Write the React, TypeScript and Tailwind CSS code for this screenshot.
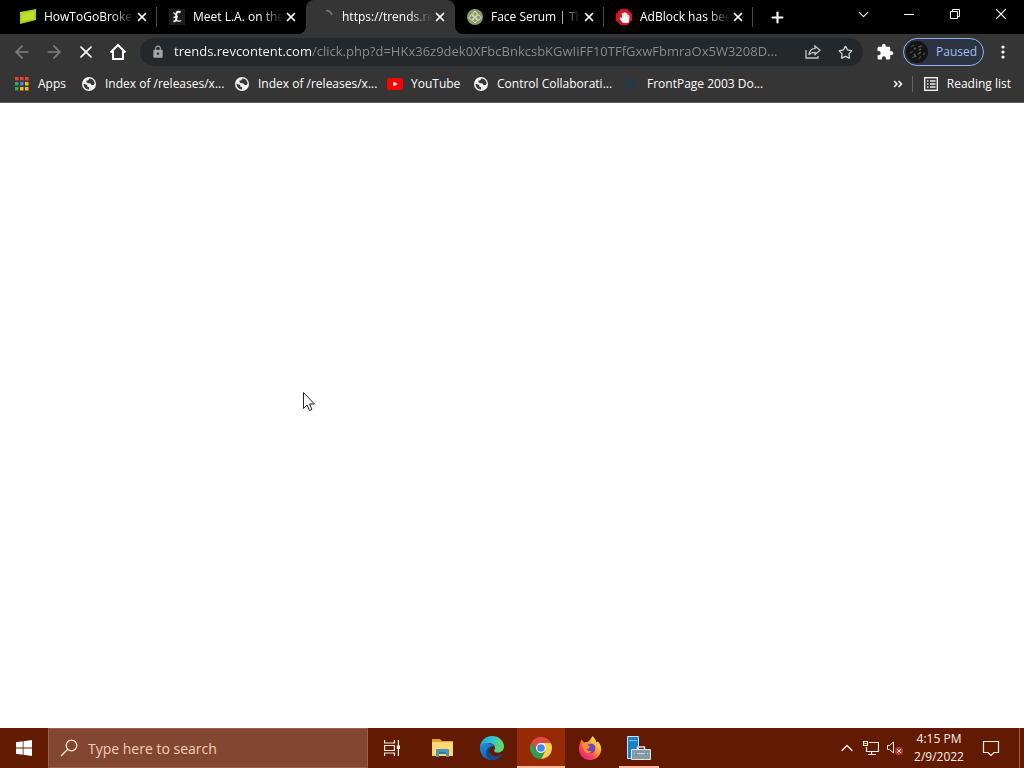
import type { ReactNode } from "react";
import { ArrowLeft, ArrowRight, X, Plus, ChevronDown, ChevronUp, Star } from "lucide-react";
import { MdExtension, MdLock } from "react-icons/md";
import { FaHandPaper } from "react-icons/fa";

function HowToIcon() {
  return (
    <svg viewBox="0 0 16 16" className="size-4 shrink-0">
      <path d="M0 3 L16 0 V11 L0 15 Z" fill="#a8cf1c" />
      <path d="M2 5 L14 2 V10 L2 12 Z" fill="#bfe02a" />
    </svg>
  );
}

function LaIcon() {
  return (
    <span className="flex size-4 shrink-0 items-center justify-center bg-[#1c1c1c]">
      <svg viewBox="0 0 16 16" className="size-4" fill="none" stroke="#f5f5f5">
        <path d="M11.500 3.500C10 2 7.500 2.500 7.300 5V10C7.300 11.500 6 12.500 4.500 12" strokeWidth="2" />
        <path d="M4.500 3.500C5.500 5 6 5.500 7 5.500M4.500 8.500L9 7.500M6 11.500C8 10.700 9.500 13.500 12 11.500" strokeWidth="1.300" />
      </svg>
    </span>
  );
}

function SpinnerIcon() {
  return (
    <svg viewBox="0 0 16 16" className="size-4 shrink-0" fill="none">
      <path d="M8 1.500A6.500 6.500 0 0 1 14 6" stroke="#777b82" strokeWidth="1.600" />
    </svg>
  );
}

function SerumIcon() {
  return (
    <svg viewBox="0 0 16 16" className="size-4 shrink-0" fill="none">
      <circle cx="8" cy="8" r="8" fill="#8c9b6c" />
      <path d="M8 2L10.500 5L8 8L5.500 5ZM4.500 5.500L7 8.500L4.500 11.500L2 8.500ZM11.500 5.500L14 8.500L11.500 11.500L9 8.500ZM8 8.500L10.500 11.500L8 14L5.500 11.500Z" stroke="#dfe3c9" strokeWidth="1" />
    </svg>
  );
}

function AdBlockIcon() {
  return (
    <span className="relative flex size-4 shrink-0 items-center justify-center">
      <svg viewBox="0 0 16 16" className="absolute size-4">
        <path d="M4.700 0H11.300L16 4.700V11.300L11.300 16H4.700L0 11.300V4.700Z" fill="#d81426" />
      </svg>
      <FaHandPaper className="relative size-[11px] text-white" />
    </span>
  );
}

function GlobeIcon() {
  return (
    <svg viewBox="0 0 16 16" className="size-4 shrink-0">
      <circle cx="8" cy="8" r="7" fill="#f1f1f1" />
      <path d="M8.500 2.600L7 4.500H5.500V6.300L7 7.200H9.200L10.500 9H12.700L13.600 7.600C13.500 5 11.500 2.700 8.500 2.600Z" fill="#373737" />
      <path d="M2.600 7.800L6.200 9V10.500L8 11.300V13.400C5 13.500 2.500 11 2.600 7.800Z" fill="#373737" />
    </svg>
  );
}

function YouTubeIcon() {
  return (
    <svg viewBox="0 0 16 16" className="size-4 shrink-0">
      <rect x="0" y="2" width="16" height="12" rx="2.500" fill="#f00" />
      <path d="M6.300 5.500L10.600 8L6.300 10.500Z" fill="#fff" />
    </svg>
  );
}

function FrontPageIcon() {
  return (
    <svg viewBox="0 0 16 16" className="size-4 shrink-0">
      <rect x="1" y="2" width="12" height="12" rx="2" fill="#2c3640" />
    </svg>
  );
}

const appColors = ["#ea4335", "#ea4335", "#ea4335", "#34a853", "#4285f4", "#fbbc05", "#34a853", "#fbbc05", "#fbbc05"];

function AppsIcon() {
  return (
    <svg viewBox="0 0 16 16" className="size-4 shrink-0">
      {appColors.map((color, i) => (
        <rect key={i} x={1 + (i % 3) * 5} y={1 + Math.floor(i / 3) * 5} width="3.500" height="3.500" fill={color} />
      ))}
    </svg>
  );
}

function HomeIcon() {
  return (
    <svg viewBox="0 0 18 18" className="size-[18px]" fill="none" stroke="#fff" strokeWidth="2">
      <path d="M1.500 9.500L9 2L16.500 9.500M4 8V16H14V8" />
    </svg>
  );
}

function ShareIcon() {
  return (
    <svg viewBox="0 0 16 16" className="size-4" fill="none" stroke="#c4c7ca" strokeWidth="1.300">
      <path d="M1 6V14H13V12" />
      <path d="M10 2L15 6.300L10 10.500V8.300C7 8.300 5 9.200 3.800 11C4.200 7.500 6.500 4.700 10 4.300Z" />
    </svg>
  );
}

function ReadingListIcon() {
  return (
    <svg viewBox="0 0 16 16" className="size-4" fill="none" stroke="#f1f1f1" strokeWidth="1.400">
      <rect x="1.700" y="1.700" width="12.600" height="12.600" />
      <path d="M4 5H5.500M7 5H12.500M4 8H5.500M7 8H12.500M4 11H5.500M7 11H12.500" />
    </svg>
  );
}

function AvatarIcon() {
  return (
    <svg viewBox="0 0 22 22" className="size-[22px]">
      <circle cx="11" cy="11" r="11" fill="#131413" />
      <path d="M5 6L8 4M12 6L16 5M4 12L7 10M6 17L9 15M13 18L15 15M17 14L19 12" stroke="#454541" strokeWidth="1.300" />
      <path d="M8 8L10 7M13 9L15 8M8 13L10 16M12 13L15 11" stroke="#5c5b54" strokeWidth="1.500" />
    </svg>
  );
}

type Tab = { title: string; icon: ReactNode; state?: "active" | "before" | "after" };

const tabs: Tab[] = [
  { title: "HowToGoBroke.", icon: <HowToIcon /> },
  { title: "Meet L.A. on the", icon: <LaIcon />, state: "before" },
  { title: "https://trends.re", icon: <SpinnerIcon />, state: "active" },
  { title: "Face Serum | Th", icon: <SerumIcon />, state: "after" },
  { title: "AdBlock has bee", icon: <AdBlockIcon /> },
];

const outerStyles = { active: "bg-black", before: "bg-[#353535]", after: "bg-[#353535]", plain: "bg-black" };
const innerStyles = {
  active: "rounded-t-lg bg-[#353535]",
  before: "rounded-br-lg bg-black",
  after: "rounded-bl-lg bg-black",
  plain: "bg-black",
};

function TabItem({ tab }: { tab: Tab }) {
  const kind = tab.state ?? "plain";
  return (
    <li className={`w-[149px] shrink-0 ${outerStyles[kind]}`}>
      <div className={`flex h-full items-center pl-3 ${innerStyles[kind]}`}>
        <button type="button" className="flex items-center gap-2 text-left">
          {tab.icon}
          <span className="w-[90px] whitespace-nowrap text-white [mask-image:linear-gradient(to_right,black_75%,transparent)]">
            {tab.title}
          </span>
        </button>
        <button type="button" aria-label="Close tab" className="-ml-px flex size-[18px] shrink-0 items-center justify-center text-white">
          <X className="size-[14px]" strokeWidth={3} />
        </button>
        {(kind === "plain" || kind === "after") && <span className="ml-auto h-5 w-px bg-[#4a4a4a]" />}
      </div>
    </li>
  );
}

const bookmarks = [
  { title: "Apps", icon: <AppsIcon />, width: "w-[67px]" },
  { title: "Index of /releases/x...", icon: <GlobeIcon />, width: "w-[153px]" },
  { title: "Index of /releases/x...", icon: <GlobeIcon />, width: "w-[153px]" },
  { title: "YouTube", icon: <YouTubeIcon />, width: "w-[86px]" },
  { title: "Control Collaborati...", icon: <GlobeIcon />, width: "w-[150px]" },
  { title: "FrontPage 2003 Do...", icon: <FrontPageIcon />, width: "w-[140px]" },
];

function IconButton({ label, className, children }: { label: string; className: string; children: ReactNode }) {
  return (
    <button type="button" aria-label={label} className={`flex shrink-0 items-center justify-center ${className}`}>
      {children}
    </button>
  );
}

function ExplorerIcon() {
  return (
    <svg viewBox="0 0 24 24" className="size-6">
      <path d="M1 3H9L11 5H22V10H1Z" fill="#e2a32c" />
      <path d="M1 6H22V20H1Z" fill="#ffd873" />
      <path d="M5 14Q5 13 6 13H17Q18 13 18 14V21H15V17H8V21H5Z" fill="#4a97bd" />
      <path d="M8 16H15V18H8Z" fill="#2f7ba4" />
    </svg>
  );
}

function EdgeIcon() {
  return (
    <svg viewBox="0 0 24 24" className="size-6">
      <defs>
        <linearGradient id="edge-top" x1="0" y1="0.300" x2="1" y2="0.500">
          <stop offset="0" stopColor="#2aa5e4" />
          <stop offset="0.500" stopColor="#2fc6cf" />
          <stop offset="1" stopColor="#6cdc52" />
        </linearGradient>
        <linearGradient id="edge-side" x1="0" y1="0" x2="0.800" y2="1">
          <stop offset="0" stopColor="#1f8fe0" />
          <stop offset="1" stopColor="#0c59a4" />
        </linearGradient>
      </defs>
      <path d="M0 12C0 5 5 0 12 0C19 0 24 5 24 10.500C24 14 21.500 16.500 18 16.500C15 16.500 14 15.500 14 14.700C14 14 15 13.500 15 11.700C15 9 12 7 8.500 7C4 7 1 9 0 12Z" fill="url(#edge-top)" />
      <path d="M0 12C1 8.500 4 6.800 7.500 7C11 7.200 13.500 9 14 10.500C11 9.500 9 12 9 14.500C9 18.500 13 21.500 17 20.500C19 20.300 21 19 22.300 17.500C20.500 21.500 17 24 12 24C5 24 0 19 0 12Z" fill="url(#edge-side)" />
      <path d="M9 14.500C8.500 19 13 22 17.500 20.500C19.500 20 21.500 18.500 22.300 17.500C20.500 21.500 17 24 12 24C8 23 5.500 19.500 6 16C6.500 12.500 9.500 10 13 10.300C10.500 10.500 9 12.500 9 14.500Z" fill="#114a8b" />
    </svg>
  );
}

function ChromeIcon() {
  return (
    <svg viewBox="0 0 24 24" className="size-[22px]">
      <path d="M12 6.500H22.700A12 12 0 0 1 12 24L16.800 14.800Z" fill="#fcd04b" />
      <path d="M1.600 6A12 12 0 0 0 12 24L16.800 14.800L7.200 14.700Z" fill="#2f9e4f" />
      <path d="M1.600 6L7.200 14.700L12 6.500H22.700A12 12 0 0 0 1.600 6Z" fill="#dd4b3e" />
      <circle cx="12" cy="12" r="5.500" fill="#fff" />
      <circle cx="12" cy="12" r="4.200" fill="#4587f0" />
    </svg>
  );
}

function FirefoxIcon() {
  return (
    <svg viewBox="0 0 24 24" className="size-6">
      <defs>
        <linearGradient id="fox" x1="0.900" y1="0.100" x2="0.200" y2="0.900">
          <stop offset="0" stopColor="#fff04a" />
          <stop offset="0.450" stopColor="#ff9b2b" />
          <stop offset="0.750" stopColor="#ff4458" />
          <stop offset="1" stopColor="#e02a83" />
        </linearGradient>
      </defs>
      <path d="M3.500 3.500L6 6.500Q8 5.700 9.500 6.300Q12.500 4 14.500 0Q18 3 18.500 6.500L20 5.500Q24 10 23 15C22 20 18 24 12 24C5.500 24 1 19 1 13C1 9 2.200 6.500 3.500 3.500Z" fill="url(#fox)" />
      <path d="M8 10C10 7 15 6.500 17 10C18.500 14 16 17.500 12.500 17.500C9 17.500 7 15 8 12.500Z" fill="#7445c4" />
      <path d="M4 8Q7 6 10 8Q9 9 12 10.500Q10.500 13 8.500 13Q10 16 14 15Q10.500 19 7 16Q5 13.500 4 8Z" fill="#ff9128" />
    </svg>
  );
}

function ServerManagerIcon() {
  return (
    <svg viewBox="0 0 26 26" className="size-[26px]">
      <path d="M1.500 1.500H12.500V23.500H1.500Z" fill="#1782c5" stroke="#c9e5f5" />
      <path d="M3 5.500H11" stroke="#7fc0e8" />
      <path d="M11.500 14V12H18.500V14" fill="none" stroke="#d7e0e5" strokeWidth="1.500" />
      <path d="M5.500 14.500H24.500V24.500H5.500Z" fill="#8799a3" stroke="#d7e7ef" />
      <path d="M8 18.500H22" stroke="#c8d8e0" />
      <path d="M10 17.500V20M20 17.500V20" stroke="#4f6a78" />
    </svg>
  );
}

function TaskViewIcon() {
  return (
    <svg viewBox="0 0 18 18" className="size-[18px]" fill="none" stroke="#ffe9da" strokeWidth="1.200">
      <path d="M1.600 1V4H11.400V1M1.600 17V14H11.400V17M1.600 6.500H11.400V11.500H1.600ZM15.400 1V17" />
      <path d="M13.800 6.500H17V10H13.800Z" fill="#ffe9da" stroke="none" />
    </svg>
  );
}

function Browser() {
  return (
    <header className="border-b border-[#606060] bg-[#353535] text-[12px] text-white">
      <div className="flex h-[34px] bg-black pl-2">
        <ul className="flex min-w-0">
          {tabs.map((tab) => (
            <TabItem key={tab.title} tab={tab} />
          ))}
        </ul>
        <IconButton label="New tab" className="ml-[10px] w-7">
          <Plus className="size-[17px]" strokeWidth={3} />
        </IconButton>
        <div className="ml-auto flex h-7">
          <IconButton label="Search tabs" className="w-[46px]">
            <ChevronDown className="size-[17px]" strokeWidth={1.5} />
          </IconButton>
          <IconButton label="Minimize" className="w-[46px]">
            <span className="h-px w-[10px] bg-white" />
          </IconButton>
          <IconButton label="Restore" className="w-[46px]">
            <svg viewBox="0 0 10 10" className="size-[10px]" fill="none" stroke="#fff">
              <path d="M0.500 2.500H7.500V9.500H0.500ZM2.500 2.500V0.500H9.500V7.500H7.500" />
            </svg>
          </IconButton>
          <IconButton label="Close" className="w-[46px]">
            <svg viewBox="0 0 10 10" className="size-[10px]" stroke="#fff" strokeWidth="1.200">
              <path d="M0 0L10 10M10 0L0 10" />
            </svg>
          </IconButton>
        </div>
      </div>

      <div className="flex h-9 items-center pl-[6px]">
        <IconButton label="Back" className="w-8 text-[#808080]">
          <ArrowLeft className="size-5" strokeWidth={2} />
        </IconButton>
        <IconButton label="Forward" className="w-8 text-[#808080]">
          <ArrowRight className="size-5" strokeWidth={2} />
        </IconButton>
        <IconButton label="Stop loading" className="w-8">
          <svg viewBox="0 0 12 12" className="size-3" stroke="#fff" strokeWidth="1.600">
            <path d="M0.500 0.500L11.500 11.500M11.500 0.500L0.500 11.500" />
          </svg>
        </IconButton>
        <IconButton label="Home" className="w-8">
          <HomeIcon />
        </IconButton>
        <div className="ml-[6px] flex h-7 min-w-0 flex-1 items-center rounded-full bg-[#25282a] pl-[11px]">
          <MdLock className="size-[14px] shrink-0 text-[#a0a3a7]" />
          <input
            aria-label="Address"
            className="ml-[9px] min-w-0 flex-1 bg-linear-to-r from-white from-[138px] to-[#8b8e91] to-[138px] bg-clip-text text-[13px] text-transparent outline-none"
            defaultValue="trends.revcontent.com/click.php?d=HKx36z9dek0XFbcBnkcsbKGwIiFF10TFfGxwFbmraOx5W3208D..."
          />
          <IconButton label="Share" className="ml-2 w-8">
            <ShareIcon />
          </IconButton>
          <IconButton label="Bookmark this page" className="mr-[2px] w-8 text-[#d5d7da]">
            <Star className="size-[15px]" strokeWidth={2} />
          </IconButton>
        </div>
        <IconButton label="Extensions" className="ml-[7px] w-[30px]">
          <MdExtension className="size-[18px]" />
        </IconButton>
        <button type="button" className="ml-[3px] flex h-7 w-[81px] items-center gap-2 rounded-full border border-[#8ab4f8] bg-[#2c3442] pl-[2px] text-[#a5bdf0]">
          <AvatarIcon />
          Paused
        </button>
        <IconButton label="Menu" className="mr-[3px] w-[37px]">
          <svg viewBox="0 0 4 14" className="h-[14px] w-1" fill="#fff">
            <circle cx="2" cy="2" r="1.600" />
            <circle cx="2" cy="7" r="1.600" />
            <circle cx="2" cy="12" r="1.600" />
          </svg>
        </IconButton>
      </div>

      <nav aria-label="Bookmarks" className="flex h-8 items-start pl-[14px]">
        {bookmarks.map((item, i) => (
          <a key={i} href="#" className={`flex h-7 shrink-0 items-center gap-2 whitespace-nowrap ${item.width}`}>
            {item.icon}
            {item.title}
          </a>
        ))}
        <button type="button" aria-label="More bookmarks" className="ml-auto h-7 w-7">
          <svg viewBox="0 0 10 8" className="mx-auto w-[10px]" fill="none" stroke="#fff" strokeWidth="1.500">
            <path d="M1 1L4 4L1 7M5.500 1L8.500 4L5.500 7" />
          </svg>
        </button>
        <span className="mt-[6px] h-4 w-px bg-[#666]" />
        <button type="button" className="ml-[10px] mr-[13px] flex h-7 items-center gap-2 whitespace-nowrap">
          <ReadingListIcon />
          Reading list
        </button>
      </nav>
    </header>
  );
}

const taskbarApps = [
  { name: "File Explorer", icon: <ExplorerIcon />, style: "" },
  { name: "Microsoft Edge", icon: <EdgeIcon />, style: "" },
  { name: "Google Chrome", icon: <ChromeIcon />, style: "border-b-2 border-[#ffb596] bg-[#962a05] pt-[2px]" },
  { name: "Firefox", icon: <FirefoxIcon />, style: "" },
];

function Taskbar() {
  return (
    <footer className="flex h-10 bg-[#621a03] text-[#fff0e6]">
      <IconButton label="Start" className="w-12">
        <svg viewBox="0 0 16 16" className="size-4" fill="#fff">
          <path d="M0 2.300L6.700 1.300V7.500H0ZM7.500 1.200L16 0V7.500H7.500ZM0 8.400H6.700V14.700L0 13.700ZM7.500 8.400H16V16L7.500 14.800Z" />
        </svg>
      </IconButton>
      <label className="flex w-80 items-center border border-[#98604d] bg-[#824733] pl-[11px]">
        <svg viewBox="0 0 18 18" className="size-[18px] shrink-0" fill="none" stroke="#ffe1d0" strokeWidth="1.300">
          <circle cx="11.500" cy="6.500" r="5.300" />
          <path d="M7.700 10.300L1 17" />
        </svg>
        <input
          aria-label="Search"
          placeholder="Type here to search"
          className="ml-[10px] w-full bg-transparent text-[14px] outline-none placeholder:text-[#f2cdbb]"
        />
      </label>
      <IconButton label="Task view" className="w-12">
        <TaskViewIcon />
      </IconButton>
      <div className="ml-[3px] flex gap-px">
        {taskbarApps.map((app) => (
          <IconButton key={app.name} label={app.name} className={`w-12 ${app.style}`}>
            {app.icon}
          </IconButton>
        ))}
        <IconButton label="Server Manager" className="mx-1 w-10 border-b-2 border-[#ffb596] pt-[2px]">
          <ServerManagerIcon />
        </IconButton>
      </div>
      <div className="ml-auto flex">
        <IconButton label="Show hidden icons" className="w-6">
          <ChevronUp className="size-[20px]" strokeWidth={1.5} />
        </IconButton>
        <IconButton label="Network" className="w-6">
          <svg viewBox="0 0 16 16" className="size-4" fill="none" stroke="#fff0e6" strokeWidth="1.200">
            <path d="M6 2.500H15.500V11.500H3.500V7M8.500 11.500V14.500M5 14.500H13M0.500 1.500H4.500V5.500H0.500ZM1.500 3.500H3.500" />
          </svg>
        </IconButton>
        <IconButton label="Volume muted" className="w-6">
          <svg viewBox="0 0 16 16" className="size-4" fill="none" stroke="#fff0e6">
            <path d="M0.500 5.500H2.500L6.500 2V13L2.500 9.500H0.500Z" />
            <circle cx="12" cy="11" r="4" fill="#c23a38" stroke="none" />
            <path d="M10 9L14 13M14 9L10 13" />
          </svg>
        </IconButton>
        <button type="button" className="ml-2 w-12 whitespace-nowrap text-center text-[12px] leading-[18px]">
          <span className="-mx-2 block">4:15 PM</span>
          <span className="-mx-2 block">2/9/2022</span>
        </button>
        <IconButton label="Notifications" className="w-14">
          <svg viewBox="0 0 18 18" className="size-[18px]" fill="none" stroke="#fff0e6" strokeWidth="1.200">
            <path d="M1.500 2.500H16.500V13.500H12L9 16.500L6 13.500H1.500Z" />
          </svg>
        </IconButton>
        <button type="button" aria-label="Show desktop" className="w-[5px] border-l border-[#96604d]" />
      </div>
    </footer>
  );
}

export default function App() {
  return (
    <div className="relative flex min-h-screen flex-col bg-white font-['Open_Sans','Noto_Sans',sans-serif]">
      <Browser />
      <main className="flex-1 bg-white" />
      <Taskbar />
      <svg viewBox="0 0 12 20" className="absolute left-[303px] top-[392px] h-5 w-3" fill="#fff" stroke="#222">
        <path d="M0.500 0.500V16.500L4 13L6.500 18.500L9 17.500L6.500 12H11.500Z" />
      </svg>
    </div>
  );
}
